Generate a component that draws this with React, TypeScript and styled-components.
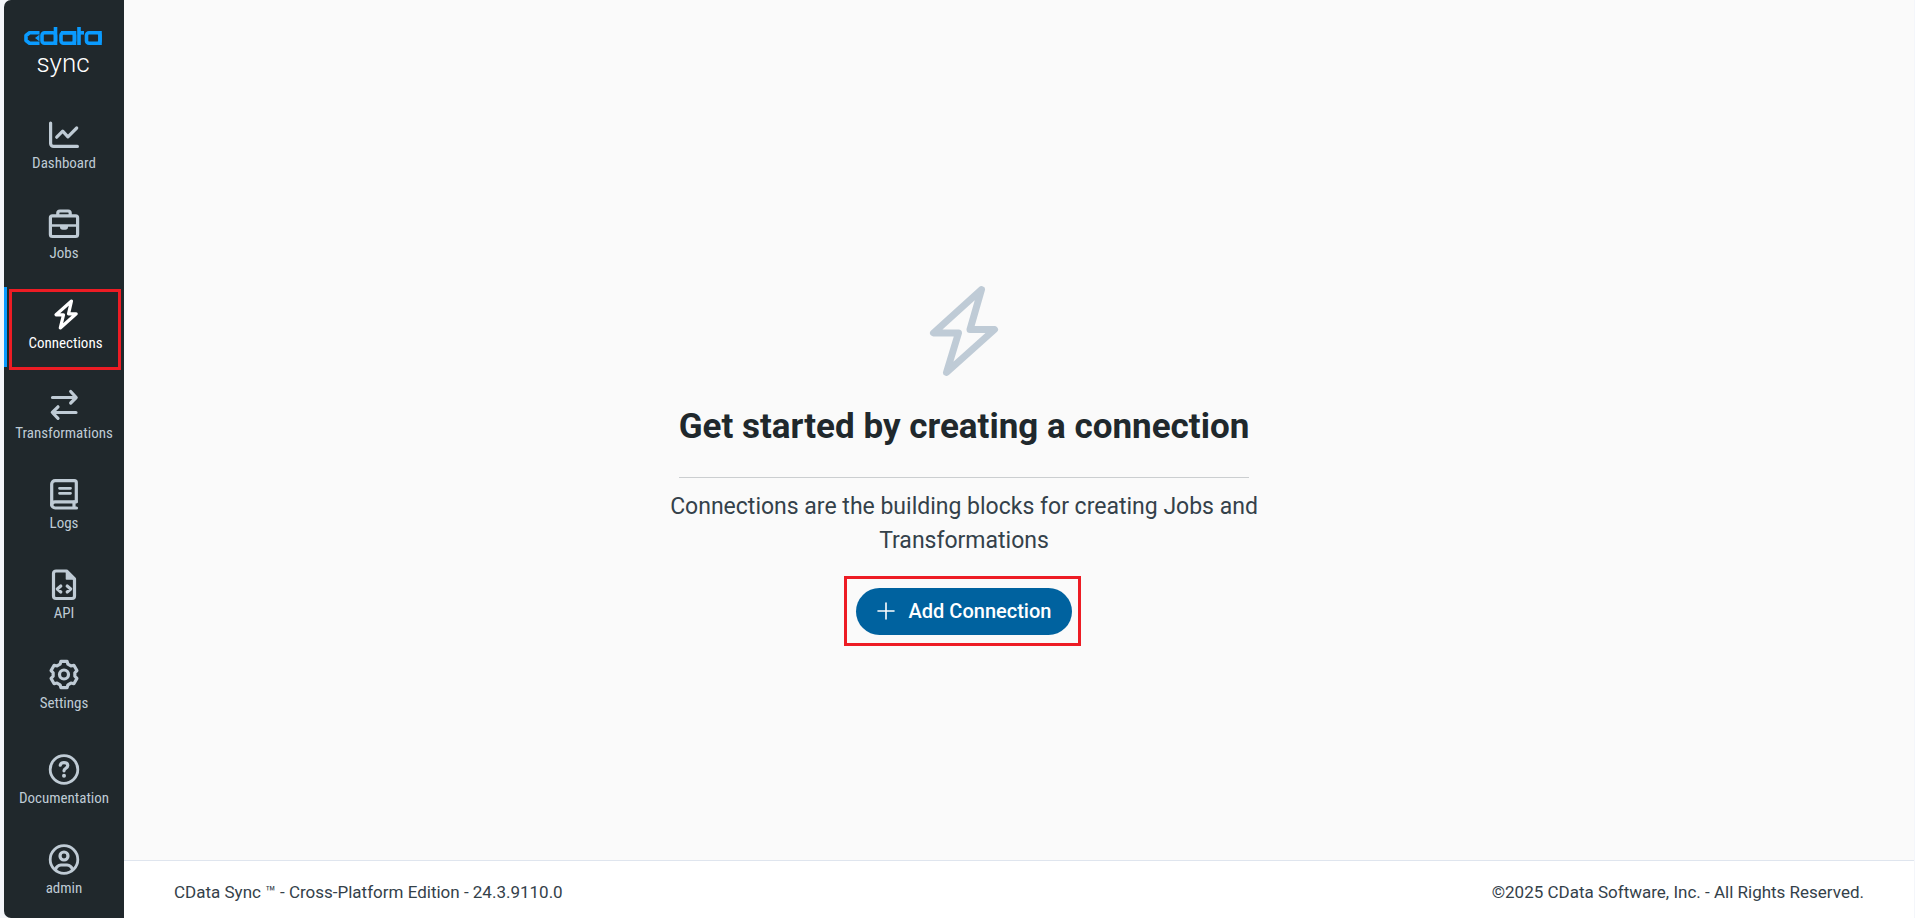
import React from "react";
import styled, { createGlobalStyle } from "styled-components";

const GlobalStyle = createGlobalStyle`
  *, *::before, *::after { box-sizing: border-box; }
  body {
    margin: 0;
    background: #f4f6fa;
    color: #34414a;
    font-family: Roboto, "Liberation Sans", sans-serif;
  }
`;

const Shell = styled.div`
  display: flex;
  min-height: 100vh;
  padding: 0 1px 0 4px;
`;

const Sidebar = styled.nav`
  display: flex;
  flex-direction: column;
  flex: 0 0 120px;
  background: #20282c;
  border-radius: 7px 0 0 7px;
  font-family: "Roboto Condensed", "Liberation Sans Narrow", Roboto, sans-serif;
`;

const Brand = styled.a`
  display: flex;
  flex-direction: column;
  align-items: center;
  height: 107px;
  padding: 26px 2px 0 0;
  color: #ffffff;
  text-decoration: none;
`;

const Product = styled.span`
  font-family: Roboto, sans-serif;
  font-size: 26px;
  font-weight: 300;
  line-height: 34px;
`;

const NavList = styled.ul<{ $bottom?: boolean }>`
  display: flex;
  flex-direction: column;
  gap: 10px;
  list-style: none;
  margin: ${(p) => (p.$bottom ? "auto 0 6px" : "0")};
  padding: 0;
`;

const NavItem = styled.li`
  position: relative;
`;

const NavLink = styled.a<{ $active?: boolean }>`
  display: flex;
  flex-direction: column;
  align-items: center;
  gap: 2px;
  height: 80px;
  padding-top: 12px;
  border-left: ${(p) => (p.$active ? "3px solid #0a9bff" : "0")};
  color: ${(p) => (p.$active ? "#ffffff" : "#bfcbd5")};
  font-size: 15px;
  line-height: 20px;
  text-decoration: none;
  white-space: nowrap;
`;

const Highlight = styled.span`
  position: absolute;
  inset: 2px 3px -3px 5px;
  border: 3px solid #ed1c24;
  pointer-events: none;
`;

const Content = styled.div`
  display: flex;
  flex: 1;
  flex-direction: column;
  background: #fafafa;
`;

const Main = styled.main`
  display: flex;
  flex: 1;
  flex-direction: column;
  align-items: center;
  justify-content: center;
  padding: 60px 110px 2px 0;
`;

const Title = styled.h1`
  margin: 28px 0 0;
  padding-bottom: 27px;
  border-bottom: 1px solid #cbced0;
  color: #20282c;
  font-size: 35px;
  font-weight: 700;
  line-height: 46px;
`;

const Lead = styled.p`
  max-width: 600px;
  margin: 12px 0 30px;
  font-size: 23px;
  line-height: 34px;
  text-align: center;
`;

const Action = styled.div`
  position: relative;
`;

const ActionHighlight = styled(Highlight)`
  inset: -12px -9px -11px -12px;
`;

const AddButton = styled.button`
  display: flex;
  align-items: center;
  gap: 14px;
  height: 47px;
  padding: 0 21px;
  border: 0;
  border-radius: 24px;
  background: #00629f;
  color: #ffffff;
  font-family: inherit;
  font-size: 20px;
  font-weight: 500;
  line-height: 24px;
`;

const Footer = styled.footer`
  display: flex;
  align-items: center;
  justify-content: space-between;
  height: 58px;
  padding: 4px 50px 0;
  border-top: 1px solid #dfe5ee;
  background: #ffffff;
  font-size: 17px;
  line-height: 24px;
`;

const IconSvg = ({ children }: { children: React.ReactNode }) => (
  <svg width="32" height="32" viewBox="0 0 32 32" fill="none" stroke="currentColor" strokeWidth="3.2" strokeLinecap="round" strokeLinejoin="round" aria-hidden="true">
    {children}
  </svg>
);

// Outline of a six-lobed gear: two points on each lobe and one on each flank.
const gearPoints = [0, 1, 2, 3, 4, 5]
  .flatMap((lobe) =>
    [
      [-21, 11],
      [-13, 13.5],
      [13, 13.5],
      [21, 11],
    ].map(([offset, radius]) => {
      const angle = ((lobe * 60 - 90 + offset) * Math.PI) / 180;
      return `${(16 + radius * Math.cos(angle)).toFixed(2)},${(15.5 + radius * Math.sin(angle)).toFixed(2)}`;
    })
  )
  .join(" ");

const ICONS: Record<string, React.ReactNode> = {
  dashboard: (
    <>
      <path d="M2.6 4v20.400a3 3 0 0 0 3 3h23.800" />
      <path d="M8.700 18.200l6-6 5.200 5.600 8.800-8.800" />
    </>
  ),
  jobs: (
    <>
      <rect x="2.4" y="6.800" width="27.200" height="20.700" rx="2" />
      <path d="M9.800 6.500V4a2 2 0 0 1 2-2h8.400a2 2 0 0 1 2 2v2.500" />
      <path d="M2.500 16.500h27" strokeWidth="2.600" />
      <path d="M12 16.500h8v1.500a2.700 2.700 0 0 1-2.700 2.700h-2.600a2.700 2.700 0 0 1-2.700-2.700z" fill="currentColor" stroke="none" />
    </>
  ),
  connections: <path d="M21.500 2L6 15.800h7.500L10.300 29L26.200 14.800h-7.700z" />,
  transformations: (
    <>
      <path d="M4.500 8.500h23.500M22.700 2.500L28.200 8.500l-5.500 5.500" />
      <path d="M28 23.500H4.500M10 17.800l-5.700 5.700 5.700 5.800" />
    </>
  ),
  logs: (
    <>
      <path d="M28.300 22.500V3.600a2 2 0 0 0-2-2H7.200a3.500 3.500 0 0 0-3.500 3.500V25.500A3.500 3.500 0 0 0 7.200 29h21.300M26 23v6" />
      <path d="M28.300 22.800H7a3.300 3.300 0 0 0-3.300 3" />
      <path d="M11.500 9.300h11M11.500 14.300h11" strokeWidth="2.800" />
    </>
  ),
  api: (
    <>
      <path d="M18.500 2H8a2.500 2.500 0 0 0-2.500 2.500v22.500a2.500 2.500 0 0 0 2.500 2.500H24a2.500 2.500 0 0 0 2.500-2.500V10z" />
      <path d="M18.500 2.500V10h8z" fill="currentColor" strokeWidth="1.600" />
      <path d="M12.800 17l-3.500 3 3.500 3M19.200 17l3.500 3-3.500 3" />
    </>
  ),
  settings: (
    <>
      <polygon points={gearPoints} />
      <circle cx="16" cy="15.500" r="4.500" />
    </>
  ),
  documentation: (
    <>
      <circle cx="16" cy="15.500" r="13.800" strokeWidth="2.800" />
      <path d="M12.300 11.200a3.700 3 0 0 1 3.700-2.500c2.200 0 3.800 1.200 3.800 2.900 0 2.600-3.800 2.600-3.800 5.200" />
      <circle cx="16" cy="21.800" r="2" fill="currentColor" stroke="none" />
    </>
  ),
  admin: (
    <>
      <circle cx="16" cy="15.500" r="13.800" strokeWidth="2.800" />
      <circle cx="16" cy="12" r="4" />
      <path d="M7.500 25.500a6.500 6.500 0 0 1 5.500-4.500h6a6.500 6.500 0 0 1 5.500 4.500" />
    </>
  ),
};

const mainNav = [
  { id: "dashboard", label: "Dashboard" },
  { id: "jobs", label: "Jobs" },
  { id: "connections", label: "Connections", active: true },
  { id: "transformations", label: "Transformations" },
  { id: "logs", label: "Logs" },
  { id: "api", label: "API" },
  { id: "settings", label: "Settings" },
];

const userNav = [
  { id: "documentation", label: "Documentation" },
  { id: "admin", label: "admin" },
];

const Item = ({ id, label, active }: { id: string; label: string; active?: boolean }) => (
  <NavItem>
    <NavLink href={"#" + id} $active={active} aria-current={active ? "page" : undefined}>
      <IconSvg>{ICONS[id]}</IconSvg>
      {label}
    </NavLink>
    {active && <Highlight />}
  </NavItem>
);

const Logo = () => (
  <svg width="78" height="20" viewBox="0 0 78 20" fill="none" stroke="#0a9bff" strokeWidth="3.6" role="img" aria-label="CData">
    <polyline points="15.500,6.800 5.500,6.800 2,9.500 2,14.500 5.500,17.200 15.500,17.200" strokeLinejoin="round" />
    <polygon points="15.500,8.500 11,12 15.500,15.500" fill="#0a9bff" stroke="none" />
    <rect x="18" y="6.800" width="13.500" height="10.400" rx="2.500" />
    <line x1="31.500" y1="1" x2="31.500" y2="19" />
    <line x1="37" y1="6.800" x2="52" y2="6.800" />
    <rect x="37" y="6.800" width="13.500" height="10.400" rx="2.500" />
    <line x1="50.500" y1="5" x2="50.500" y2="19" />
    <line x1="55" y1="1" x2="55" y2="19" />
    <line x1="54" y1="6.800" x2="60" y2="6.800" />
    <rect x="62.500" y="6.800" width="13.500" height="10.400" rx="2.500" />
    <line x1="76" y1="5" x2="76" y2="19" />
  </svg>
);

export default function App() {
  return (
    <>
      <GlobalStyle />
      <Shell>
        <Sidebar aria-label="Main">
          <Brand href="#home">
            <Logo />
            <Product>sync</Product>
          </Brand>
          <NavList>
            {mainNav.map((n) => (
              <Item key={n.id} {...n} />
            ))}
          </NavList>
          <NavList $bottom>
            {userNav.map((n) => (
              <Item key={n.id} {...n} />
            ))}
          </NavList>
        </Sidebar>
        <Content>
          <Main>
            <svg width="70" height="92" viewBox="0 0 70 92" fill="none" stroke="#bfcbd6" strokeWidth="7" strokeLinejoin="round" aria-hidden="true">
              <path d="M52.500 5.500L4.500 49h25L17.500 88.500L65.500 45.500h-24.500z" />
            </svg>
            <Title>Get started by creating a connection</Title>
            <Lead>Connections are the building blocks for creating Jobs and Transformations</Lead>
            <Action>
              <AddButton type="button">
                <svg width="18" height="18" viewBox="0 0 18 18" fill="none" stroke="currentColor" strokeWidth="1.600" strokeLinecap="round" aria-hidden="true">
                  <path d="M9 1v16M1 9h16" />
                </svg>
                Add Connection
              </AddButton>
              <ActionHighlight />
            </Action>
          </Main>
          <Footer>
            <span>CData Sync ™ - Cross-Platform Edition - 24.3.9110.0</span>
            <span>©2025 CData Software, Inc. - All Rights Reserved.</span>
          </Footer>
        </Content>
      </Shell>
    </>
  );
}
